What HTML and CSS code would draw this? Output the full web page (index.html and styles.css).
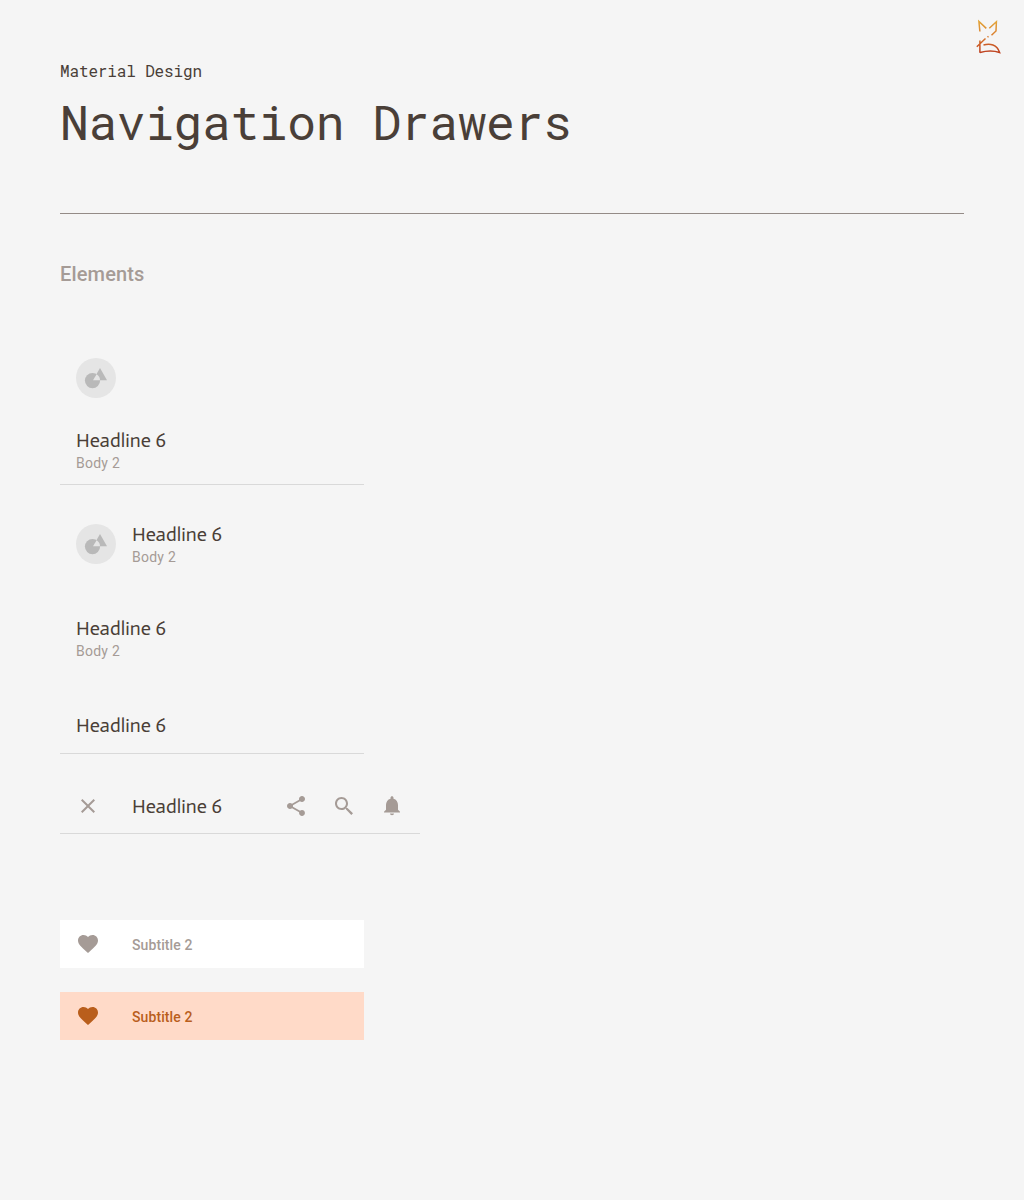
FILE: index.html
```html
<!DOCTYPE html>
<html lang="en">
<head>
<meta charset="utf-8">
<title>Navigation Drawers</title>
<link rel="stylesheet" href="styles.css">
</head>
<body>
<svg width="0" height="0" class="defs" aria-hidden="true">
  <symbol id="heart" viewBox="0 0 24 24"><path d="M12 21l-1.450-1.320C5.400 15.100 2 12.200 2 8.500 2 5.420 4.420 3 7.500 3c1.740 0 3.410.81 4.500 2.090C13.090 3.810 14.760 3 16.500 3 19.580 3 22 5.420 22 8.500c0 3.700-3.400 6.600-8.550 11.180L12 21z"/></symbol>
  <symbol id="avatar" viewBox="0 0 40 40"><circle cx="20" cy="20" r="20" fill="#e5e5e5"/><circle cx="16.500" cy="22.600" r="7.600" fill="#b9b9b9"/><path d="M24 10l7 12.300H17z" fill="#b9b9b9"/><path d="M20.600 16.200a7.600 7.600 0 0 1 3.500 6.100H17z" fill="#e5e5e5"/></symbol>
</svg>
<svg class="logo" width="26" height="36" viewBox="0 0 26 36" aria-hidden="true">
  <defs><linearGradient id="fox" gradientUnits="userSpaceOnUse" x1="0" y1="2" x2="0" y2="34"><stop offset="0" stop-color="#e3a63a"/><stop offset=".5" stop-color="#d9792c"/><stop offset="1" stop-color="#bd3f20"/></linearGradient></defs>
  <g fill="none" stroke="url(#fox)" stroke-width="1.500">
    <path d="M3.900 12.500L2.900 2.500L10.300 9.400M13.300 9.200L20.400 2.800L20 12L15.500 16.200"/>
    <path d="M12.500 17.400l-1 .8M9.500 19.500L.8 27.800M3.900 21.500V33.700"/>
    <path d="M7.500 26C14 24 21 25.500 23.600 33.500C17 31.200 10 31.800 3.900 33.500"/>
  </g>
</svg>
<main class="page">
  <header class="page-header">
    <p class="overline">Material Design</p>
    <h1 class="title">Navigation Drawers</h1>
  </header>
  <h2 class="section-title">Elements</h2>

  <section class="headers">
    <div class="head head-account lined">
      <svg class="avatar"><use href="#avatar"/></svg>
      <div class="labels"><p class="headline">Headline 6</p><p class="body">Body 2</p></div>
    </div>
    <div class="head head-row">
      <svg class="avatar"><use href="#avatar"/></svg>
      <div class="labels"><p class="headline">Headline 6</p><p class="body">Body 2</p></div>
    </div>
    <div class="head head-text">
      <div class="labels"><p class="headline">Headline 6</p><p class="body">Body 2</p></div>
    </div>
    <div class="head head-single lined"><p class="headline">Headline 6</p></div>
    <div class="head head-bar lined">
      <svg class="icon" viewBox="0 0 24 24"><path d="M19 6.410L17.590 5 12 10.590 6.410 5 5 6.410 10.590 12 5 17.590 6.410 19 12 13.410 17.590 19 19 17.590 13.410 12z"/></svg>
      <p class="headline">Headline 6</p>
      <div class="actions">
        <svg class="icon" viewBox="0 0 24 24"><path d="M18 16.080c-.76 0-1.440.3-1.960.77L8.910 12.700c.05-.23.09-.46.09-.7s-.04-.47-.09-.7l7.050-4.110c.54.5 1.250.81 2.040.81 1.660 0 3-1.340 3-3s-1.340-3-3-3-3 1.340-3 3c0 .24.04.47.09.7L8.040 9.810C7.500 9.310 6.790 9 6 9c-1.660 0-3 1.340-3 3s1.340 3 3 3c.79 0 1.500-.31 2.040-.81l7.120 4.160c-.05.21-.08.43-.08.65 0 1.610 1.310 2.920 2.920 2.920s2.920-1.310 2.920-2.920-1.310-2.920-2.920-2.920z"/></svg>
        <svg class="icon" viewBox="0 0 24 24"><path d="M15.500 14h-.79l-.28-.27C15.410 12.590 16 11.110 16 9.500 16 5.910 13.090 3 9.500 3S3 5.910 3 9.500 5.910 16 9.500 16c1.610 0 3.090-.59 4.230-1.570l.27.28v.79l5.300 5.400L21 19.300l-5.500-5.300zm-6 0C7.010 14 5 11.990 5 9.500S7.010 5 9.500 5 14 7.010 14 9.500 11.990 14 9.500 14z"/></svg>
        <svg class="icon" viewBox="0 0 24 24"><path d="M10 19.600h4c0 1-.9 1.700-2 1.700s-2-.7-2-1.700zM18 15.800V11c0-3.070-1.640-5.640-4.500-6.320V3.700c0-.83-.67-1.500-1.500-1.500s-1.500.67-1.500 1.500v.98C7.630 5.360 6 7.920 6 11v4.800l-2 1.900v.9h16v-.9z"/></svg>
      </div>
    </div>
  </section>

  <section class="items">
    <div class="item"><svg class="icon"><use href="#heart"/></svg><span>Subtitle 2</span></div>
    <div class="item active"><svg class="icon"><use href="#heart"/></svg><span>Subtitle 2</span></div>
  </section>
</main>
</body>
</html>
```
FILE: styles.css
```css
* { box-sizing: border-box; }
body { margin: 0; min-height: 1200px; background: #f5f5f5; font-family: Roboto, sans-serif; color: #4a3f38; }
p, h1, h2 { margin: 0; font-weight: 400; white-space: nowrap; }
svg { display: block; flex: none; }
.defs { position: absolute; }
.logo { position: absolute; left: 976px; top: 19px; }
.page { padding: 59px 60px 0; }
.page-header { height: 155px; border-bottom: 1px solid #948b87; }
.overline, .title { font-family: "Roboto Mono", "Liberation Mono", monospace; }
.overline { font-size: 16px; line-height: 24px; letter-spacing: -0.140px; }
.title { margin-top: 7px; font-size: 48px; line-height: 64px; letter-spacing: -0.400px; }
.section-title { margin-top: 48px; font-size: 20px; font-weight: 500; line-height: 24px; letter-spacing: 0.150px; color: #a59b96; }
.headers { display: flex; flex-direction: column; align-items: flex-start; padding-top: 56px; }
.head { width: 304px; padding: 0 16px; display: flex; }
.lined { border-bottom: 1px solid #d9d9d9; }
.avatar { width: 40px; height: 40px; }
.headline { font-family: Actor, "Noto Sans", sans-serif; font-weight: 400; font-size: 20px; line-height: 24px; letter-spacing: 0.050px; }
.body { margin-top: 1px; font-size: 14px; line-height: 20px; letter-spacing: 0.250px; color: #a59b96; }
.head-account { height: 143px; padding-top: 16px; flex-direction: column; gap: 30px; }
.head-row { height: 72px; margin-top: 23px; align-items: center; gap: 16px; }
.head-row .labels, .head-text .labels { padding-top: 1px; }
.head-text { height: 72px; margin-top: 22px; align-items: center; }
.head-single { height: 56px; margin-top: 24px; padding-bottom: 2px; align-items: center; margin-bottom: 24px; }
.head-bar { width: 360px; height: 56px; align-items: center; }
.head-bar .headline { margin-left: 32px; }
.actions { display: flex; gap: 24px; margin-left: auto; }
.icon { width: 24px; height: 24px; fill: #a59b96; }
.items { display: flex; flex-direction: column; gap: 24px; margin-top: 86px; }
.item { width: 304px; height: 48px; padding: 2px 16px 0; display: flex; align-items: center; gap: 32px; background: #fff; color: #a59b96; font-size: 14px; font-weight: 500; letter-spacing: 0.100px; }
.item .icon { fill: currentColor; margin-top: -2px; }
.active { background: #ffdac8; color: #b95e1c; }
```
